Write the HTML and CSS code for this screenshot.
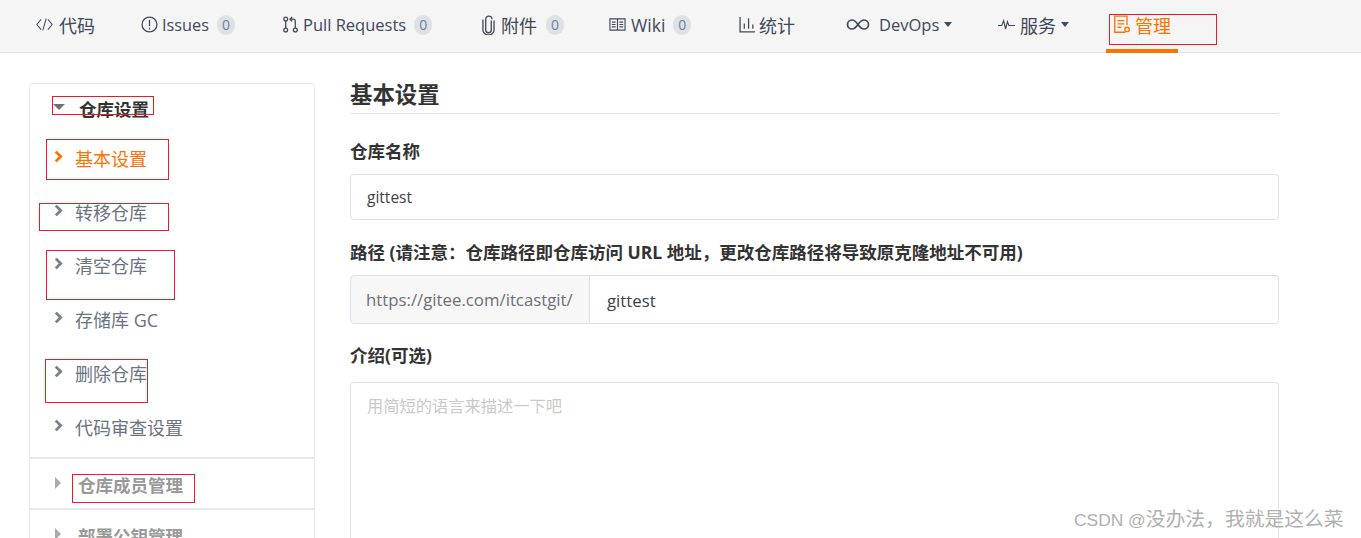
FILE: index.html
```html
<!DOCTYPE html>
<html lang="zh-CN">
<head>
<meta charset="utf-8">
<title>基本设置</title>
<link rel="stylesheet" href="styles.css">
</head>
<body>
<nav class="tabs">
  <a class="tab tab-code"><svg class="ico" viewBox="0 0 20 16"><path d="M6 2 1 8l5 6M14 2l5 6-5 6M12 1 8 15"/></svg>代码</a>
  <a class="tab tab-issues"><svg class="ico" viewBox="0 0 16 16"><circle cx="8" cy="8" r="7"/><path d="M8 3.5v6M8 11v1.600"/></svg>Issues<span class="count">0</span></a>
  <a class="tab tab-pr"><svg class="ico" viewBox="0 0 16 16"><circle cx="3.500" cy="2.800" r="1.800"/><circle cx="3.500" cy="13.200" r="1.800"/><circle cx="12.500" cy="13.200" r="1.800"/><path d="M3.500 4.600v6.800M12.500 11.400V5q0-2-2-2H8M9.500 1 7.500 3l2 2"/></svg>Pull Requests<span class="count">0</span></a>
  <a class="tab tab-att"><svg class="ico ico-clip" viewBox="0 0 12 18"><path d="M8.500 5v8.500a2.500 2.500 0 0 1-5 0V3.800a2.800 2.800 0 0 1 5.600 0"/><path d="M11 5v8.500a5 4.500 0 0 1-10 0V4"/></svg>附件<span class="count">0</span></a>
  <a class="tab tab-wiki"><svg class="ico" viewBox="0 0 18 16"><path d="M1 2h16v12H1zM9 2v12M3 5.500h4M3 8h4M3 10.500h4M11 5.500h4M11 8h4M11 10.500h4"/></svg>Wiki<span class="count">0</span></a>
  <a class="tab tab-stat"><svg class="ico ico-stat" viewBox="0 0 16 16"><path d="M1 1v14h14M5 12V7M9 12V2M13 12V8"/></svg>统计</a>
  <a class="tab tab-devops"><svg class="ico ico-wide" viewBox="0 0 24 12"><path d="M12 6C9.500 2.500 8 1.500 6 1.500a4.500 4.500 0 0 0 0 9c2 0 3.500-1 6-4.500s4-4.500 6-4.500a4.500 4.500 0 0 1 0 9c-2 0-3.500-1-6-4.500Z"/></svg>DevOps<i class="caret"></i></a>
  <a class="tab tab-svc"><svg class="ico" viewBox="0 0 18 14"><path d="M0 8h4l2-5 2 9 2-8 1.500 4H18"/></svg>服务<i class="caret"></i></a>
  <a class="tab tab-admin"><svg class="ico ico-admin" viewBox="0 0 16 18"><path d="M11 15.500H1.500V1h11v8M4 5h6M4 8h6M4 11h3.500"/><circle cx="12.500" cy="13" r="2"/></svg>管理</a>
</nav>

<div class="page">
  <aside class="side">
    <div class="group-head head-open"><i class="tri-down"></i>仓库设置</div>
    <ul class="menu">
      <li class="item on"><svg class="chev" viewBox="0 0 8 12"><path d="M1.500 1.500 6 6l-4.500 4.500"/></svg>基本设置</li>
      <li class="item"><svg class="chev" viewBox="0 0 8 12"><path d="M1.500 1.500 6 6l-4.500 4.500"/></svg>转移仓库</li>
      <li class="item"><svg class="chev" viewBox="0 0 8 12"><path d="M1.500 1.500 6 6l-4.500 4.500"/></svg>清空仓库</li>
      <li class="item"><svg class="chev" viewBox="0 0 8 12"><path d="M1.500 1.500 6 6l-4.500 4.500"/></svg>存储库 GC</li>
      <li class="item"><svg class="chev" viewBox="0 0 8 12"><path d="M1.500 1.500 6 6l-4.500 4.500"/></svg>删除仓库</li>
      <li class="item"><svg class="chev" viewBox="0 0 8 12"><path d="M1.500 1.500 6 6l-4.500 4.500"/></svg>代码审查设置</li>
    </ul>
    <div class="group-head closed"><i class="tri-right"></i>仓库成员管理</div>
    <div class="group-head closed"><i class="tri-right"></i>部署公钥管理</div>
  </aside>

  <main class="main">
    <h2 class="title">基本设置</h2>
    <div class="label label-name">仓库名称</div>
    <div class="input input-name">gittest</div>
    <div class="label label-path">路径 (请注意：仓库路径即仓库访问 URL 地址，更改仓库路径将导致原克隆地址不可用)</div>
    <div class="group">
      <span class="addon">https://gitee.com/itcastgit/</span>
      <span class="group-input">gittest</span>
    </div>
    <div class="label label-desc">介绍(可选)</div>
    <div class="textarea">用简短的语言来描述一下吧</div>
  </main>
</div>

<div class="mark mark-admin"></div>
<div class="mark mark-a"></div>
<div class="mark mark-b"></div>
<div class="mark mark-c"></div>
<div class="mark mark-d"></div>
<div class="mark mark-e"></div>
<div class="mark mark-f"></div>
<div class="watermark"><span class="wm-latin">CSDN @</span>没办法，我就是这么菜</div>
</body>
</html>
```
FILE: styles.css
```css
html, body { margin: 0; padding: 0; height: 538px; overflow: hidden; background: #fff; }
body { position: relative; font-family: "Open Sans", "Noto Sans CJK SC", sans-serif; color: #40485b; }
* { box-sizing: border-box; }

.tabs { display: flex; align-items: flex-start; height: 53px; padding-left: 36px; background: #f5f5f5; border-bottom: 1px solid #e3e3e3; }
.tab { display: flex; align-items: center; height: 52px; padding-bottom: 3px; font-size: 18px; color: #40485b; white-space: nowrap; position: relative; }
.tab-code { width: 105px; }
.tab-issues { width: 141px; font-size: 16.300px; }
.tab-pr { width: 199px; font-size: 16.500px; }
.tab-att { width: 128px; }
.tab-wiki { width: 130px; font-size: 17.600px; }
.tab-stat { width: 107px; }
.tab-devops { width: 152px; font-size: 16.500px; }
.tab-svc { width: 116px; }
.tab-admin { color: #fe7300; }
.tab-admin::after { content: ""; position: absolute; left: -8px; width: 72px; bottom: -1px; height: 4px; background: #fe7300; }
.ico { width: 17px; height: 17px; margin-right: 5px; fill: none; stroke: currentColor; stroke-width: 1.200; flex: none; }
.tab-code .ico { margin-right: 6px; }
.tab-issues .ico, .tab-pr .ico { margin-right: 4px; }
.ico-clip { width: 15px; height: 20px; margin-right: 5px; }
.ico-stat { margin-right: 3px; }
.ico-wide { width: 24px; height: 13px; margin-right: 9px; stroke-width: 1.700; }
.ico-admin { width: 20px; height: 20px; margin-right: 3px; margin-left: -2px; }
.count { display: inline-flex; align-items: center; justify-content: center; width: 18px; height: 20px; margin-left: 8px; border-radius: 10px; background: #dfe1e4; color: #6c7fa6; font-size: 14px; }
.tab-att .count { margin-left: 9px; }
.caret { width: 0; height: 0; margin-left: 5px; border-left: 4px solid transparent; border-right: 4px solid transparent; border-top: 5px solid #40485b; }

.page { display: flex; align-items: flex-start; padding: 30px 0 0 29px; }
.side { width: 286px; flex: none; border: 1px solid #e3e9ed; border-radius: 4px; }
.group-head { display: flex; align-items: center; font-size: 17.500px; font-weight: 700; }
.head-open { height: 47px; padding: 1px 0 0 23px; color: #333; }
.closed { height: 51px; padding: 2px 0 0 25px; color: #999; border-top: 2px solid #e6e8ea; }
.tri-down { width: 0; height: 0; margin-right: 14px; margin-top: -2px; border-left: 6px solid transparent; border-right: 6px solid transparent; border-top: 6px solid #6f6f6f; }
.tri-right { width: 0; height: 0; margin-right: 17px; margin-top: -3px; border-top: 6px solid transparent; border-bottom: 6px solid transparent; border-left: 6px solid #aaa; }
.menu { list-style: none; margin: 0; padding: 0 0 3px; }
.item { display: flex; align-items: center; height: 53.800px; padding: 0 0 0 24px; font-size: 18px; color: #6b7280; }
.item.on { color: #fe7300; }
.chev { width: 9px; height: 13px; margin-right: 12px; margin-top: -3px; fill: none; stroke: #7a7f8c; stroke-width: 2.600; }
.on .chev { stroke: #fe7300; }

.main { width: 929px; margin-left: 35px; flex: none; }
.title { margin: 0; height: 31px; font-size: 22.400px; line-height: 24px; font-weight: 700; color: #333; border-bottom: 1px solid #e2e2ea; }
.label { font-size: 17.500px; font-weight: 700; color: #333; line-height: 24px; }
.label-name { margin-top: 25px; }
.label-path { margin-top: 20px; }
.label-desc { margin-top: 19px; }
.input { display: flex; align-items: center; height: 46px; margin-top: 11px; padding-left: 16px; border: 1px solid #dfe1ea; border-radius: 4px; font-size: 15.500px; color: #40404a; background: #fff; }
.group { display: flex; height: 49px; margin-top: 11px; }
.addon { display: flex; align-items: center; width: 240px; padding-left: 15px; font-size: 16.800px; color: #6e6e76; background: #f7f7f8; border: 1px solid #dfe1ea; border-radius: 4px 0 0 4px; white-space: nowrap; }
.group-input { display: flex; align-items: center; flex: 1; padding: 2px 0 0 17px; font-size: 16.800px; color: #40404a; border: 1px solid #dfe1ea; border-left: 0; border-radius: 0 4px 4px 0; }
.textarea { height: 300px; margin-top: 15px; padding: 13px 16px; border: 1px solid #dfe1ea; border-radius: 4px; font-size: 16.250px; line-height: 20px; color: #c9c9c9; }

.mark { position: absolute; border: 1px solid #ed1c24; }
.mark-admin { left: 1109px; top: 14px; width: 108px; height: 31px; }
.mark-a { left: 52px; top: 96px; width: 102px; height: 19px; }
.mark-b { left: 46px; top: 139px; width: 123px; height: 41px; }
.mark-c { left: 39px; top: 203px; width: 130px; height: 28px; }
.mark-d { left: 46px; top: 250px; width: 129px; height: 50px; }
.mark-e { left: 45px; top: 359px; width: 103px; height: 44px; }
.mark-f { left: 72px; top: 474px; width: 123px; height: 29px; }
.watermark { position: absolute; left: 1074px; top: 505px; font-family: "Liberation Sans", "Noto Sans CJK SC", sans-serif; font-size: 19.800px; line-height: 28px; color: #b0b0b0; white-space: nowrap; }
.wm-latin { font-size: 17.400px; }
```
